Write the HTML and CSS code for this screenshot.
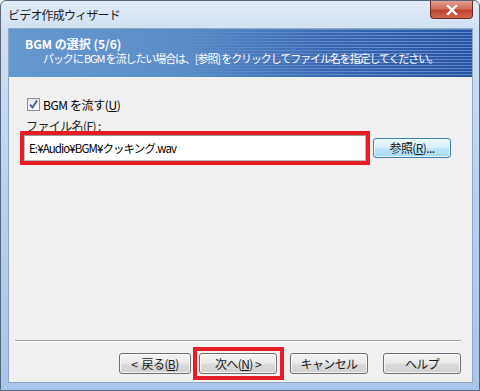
FILE: index.html
```html
<!DOCTYPE html>
<html lang="ja">
<head>
    <meta charset="UTF-8">
    <title>ビデオ作成ウィザード</title>
    <link rel="stylesheet" href="styles.css">
</head>
<body>

<div class="window">
    <div class="titlebar">
        <span class="title">ビデオ作成ウィザード</span>
        <div class="close-btn">
            <svg width="12" height="10" viewBox="0 0 12 10">
                <path d="M2 1 L10 9 M10 1 L2 9" stroke="#fff" stroke-width="2.4" stroke-linecap="square"/>
            </svg>
        </div>
    </div>

    <div class="client">
        <div class="header">
            <p class="step-title">BGM の選択 (5/6)</p>
            <p class="step-desc">パックに BGM を流したい場合は、[参照] をクリックしてファイル名を指定してください。</p>
        </div>

        <div class="content">
            <label class="check-row">
                <span class="checkbox">
                    <svg width="13" height="13" viewBox="0 0 13 13">
                        <path d="M3 6.5 L5.5 9.5 L10 2.5" fill="none" stroke="#3d5a96" stroke-width="1.8"/>
                    </svg>
                </span>
                <span>BGM を流す(<u>U</u>)</span>
            </label>

            <p class="field-label">ファイル名(<u>F</u>) :</p>

            <div class="file-row">
                <div class="mark">
                    <div class="textbox">E:¥Audio¥BGM¥クッキング.wav</div>
                </div>
                <button class="btn btn-hot">参照(<u>R</u>)...</button>
            </div>
        </div>

        <div class="footer">
            <div class="separator"></div>
            <div class="buttons">
                <button class="btn btn-back">&lt;&nbsp; 戻る(<u>B</u>)</button>
                <div class="mark mark-btn">
                    <button class="btn">次へ(<u>N</u>) &gt;</button>
                </div>
                <button class="btn btn-cancel">キャンセル</button>
                <button class="btn">ヘルプ</button>
            </div>
        </div>
    </div>
</div>

</body>
</html>
```

FILE: styles.css
```css
* {
    box-sizing: border-box;
}
body {
    margin: 0;
    padding: 0;
    width: 480px;
    height: 391px;
    overflow: hidden;
    font-family: "Noto Sans CJK JP", "Liberation Sans", sans-serif;
    font-size: 12px;
    color: #000;
    background: #fff;
}
p {
    margin: 0;
}
.window {
    width: 480px;
    height: 391px;
    display: flex;
    flex-direction: column;
    border: 1px solid #56677c;
    border-radius: 6px 6px 0 0;
    background: linear-gradient(to bottom, #e3edf8 0px, #cfdff2 30px, #b9d1ee 200px, #a9c6ea 391px);
    padding: 0 6px 7px 7px;
}
.titlebar {
    height: 27px;
    display: flex;
    justify-content: space-between;
    align-items: flex-start;
}
.title {
    padding-top: 6px;
    font-size: 12px;
    line-height: 16px;
    letter-spacing: -0.8px;
    color: #1a1a1a;
}
.close-btn {
    width: 43px;
    height: 18px;
    border: 1px solid #6e2a24;
    border-top: none;
    border-radius: 0 0 4px 4px;
    background: linear-gradient(to bottom, #e4a08f 0%, #d0705c 45%, #c0432e 55%, #d16a4f 100%);
    display: flex;
    align-items: center;
    justify-content: center;
}
.client {
    flex: 1;
    display: flex;
    flex-direction: column;
    background: #f0f0f0;
    border: 1px solid #8fa7c4;
}
.header {
    position: relative;
    height: 48px;
    padding: 7px 0 0 16px;
    color: #fff;
    background: linear-gradient(to right, #6598cf 0%, #5a8cc8 40%, #3d6db6 75%, #2b58a6 100%);
    overflow: hidden;
}
.header::after {
    content: "";
    position: absolute;
    inset: 0;
    background: repeating-linear-gradient(to bottom, rgba(140, 175, 225, 0.55) 0 1px, rgba(30, 70, 150, 0.25) 1px 3px);
    -webkit-mask-image: linear-gradient(to right, transparent 35%, #000 80%);
    mask-image: linear-gradient(to right, transparent 35%, #000 80%);
}
.step-title {
    position: relative;
    z-index: 1;
    font-weight: bold;
    font-size: 12px;
    line-height: 15px;
}
.step-desc {
    position: relative;
    z-index: 1;
    padding-left: 18px;
    font-size: 11px;
    line-height: 15px;
    letter-spacing: -1.1px;
    white-space: nowrap;
}
.content {
    padding: 20px 0 0 11px;
}
.check-row {
    display: flex;
    align-items: center;
    gap: 3px;
    margin-left: 7px;
    height: 15px;
    letter-spacing: -0.4px;
}
.checkbox {
    width: 13px;
    height: 13px;
    border: 1px solid #8e8f8f;
    background: linear-gradient(to bottom, #e6e6e6, #fbfbfb);
    display: flex;
}
.checkbox svg {
    margin: -1px;
}
.field-label {
    margin: 7px 0 0 6px;
    height: 12px;
    line-height: 14px;
    letter-spacing: -0.6px;
    color: #222;
}
.file-row {
    display: flex;
    align-items: center;
    gap: 3px;
}
.mark {
    position: relative;
    border: 4px solid #e51d25;
}
.textbox {
    width: 342px;
    height: 26px;
    border: 1px solid #b8bcc4;
    border-top-color: #999;
    background: #fff;
    padding: 0 4px;
    font-size: 11.5px;
    line-height: 24px;
    letter-spacing: -0.9px;
    white-space: nowrap;
}
.btn {
    width: 78px;
    height: 21px;
    padding: 0;
    font-family: inherit;
    font-size: 12px;
    line-height: 18px;
    letter-spacing: -0.6px;
    color: #1a1a1a;
    border: 1px solid #707070;
    border-radius: 3px;
    background: linear-gradient(to bottom, #f3f3f3 0%, #ebebeb 48%, #dcdcdc 52%, #d0d0d0 100%);
    box-shadow: inset 0 0 0 1px rgba(255, 255, 255, 0.7);
}
.btn-hot {
    height: 20px;
    border-color: #3c7fb1;
    background: linear-gradient(to bottom, #eaf6fd 0%, #d9f0fc 48%, #bee6fd 52%, #a7d9f5 100%);
}
.footer {
    margin-top: auto;
}
.separator {
    height: 1px;
    margin: 0 11px 0 6px;
    background: #a0a0a0;
    box-shadow: 0 1px 0 #fff;
}
.buttons {
    display: flex;
    justify-content: flex-end;
    align-items: center;
    padding: 6px 11px 2px 0;
}
.btn-back {
    width: 72px;
    margin-right: 2px;
}
.mark-btn {
    padding: 2px 3px 2px 2px;
    margin-right: 6px;
}
.btn-cancel {
    margin-right: 15px;
}
```
